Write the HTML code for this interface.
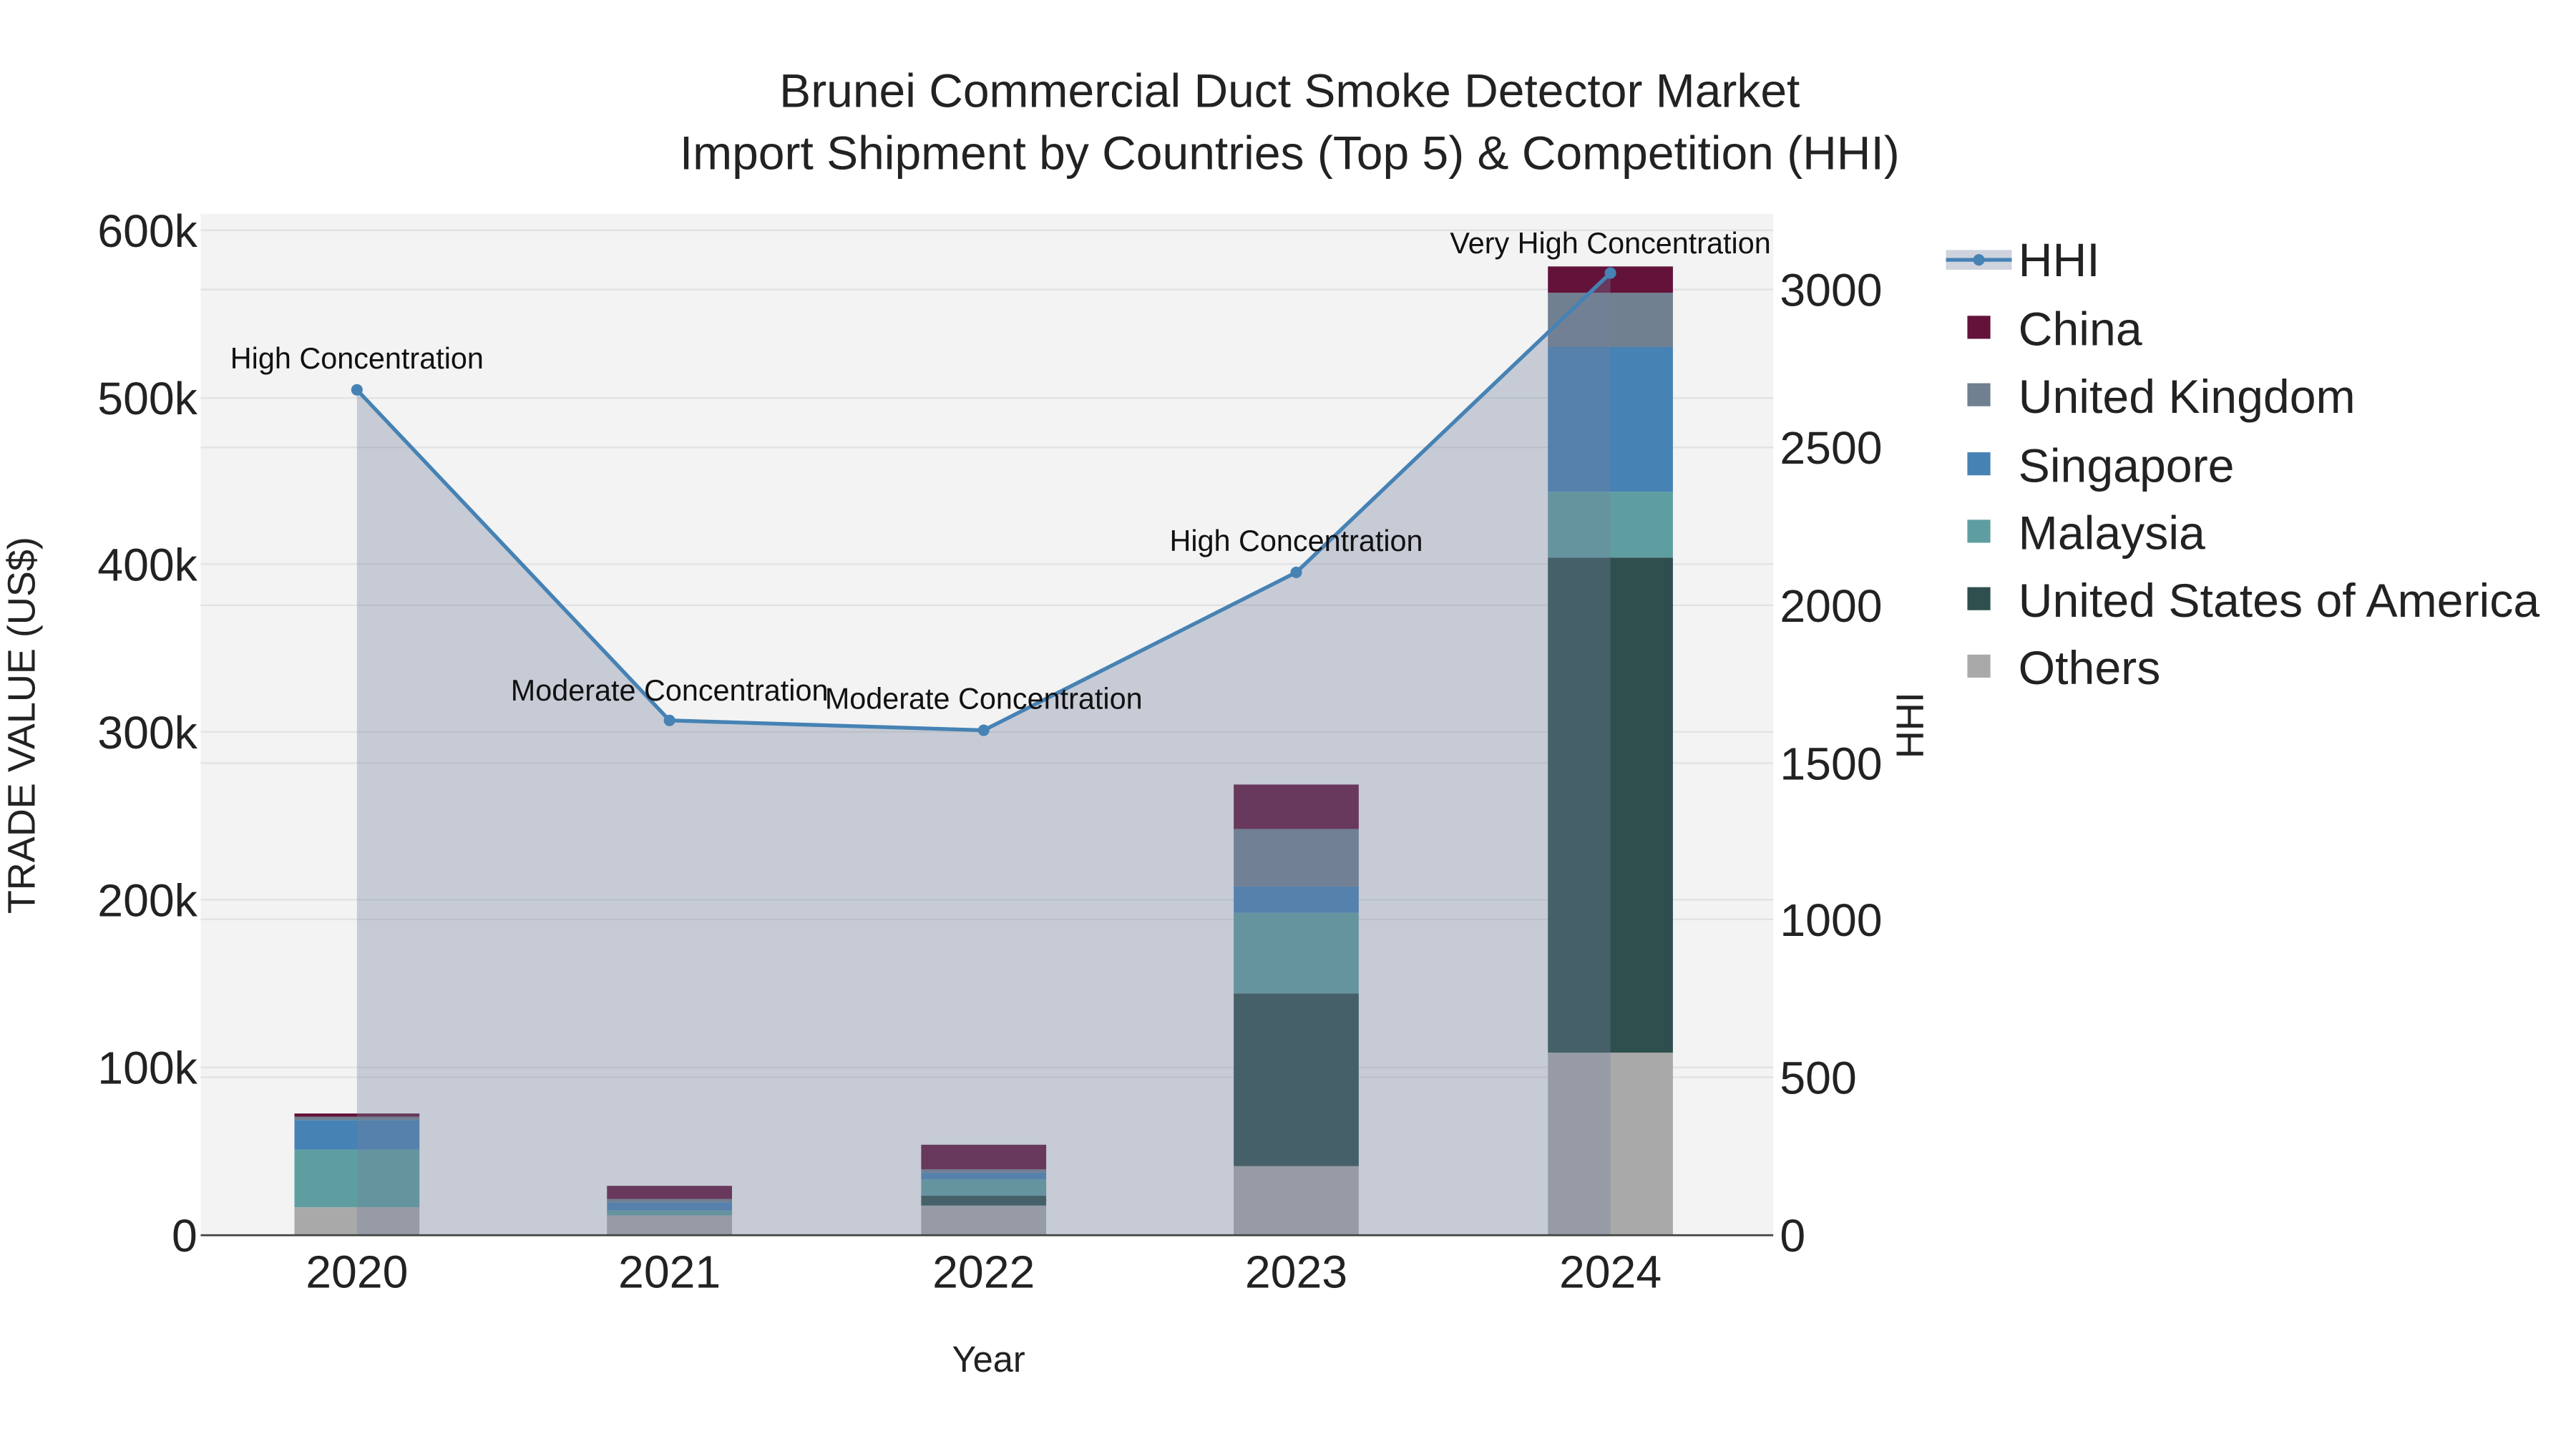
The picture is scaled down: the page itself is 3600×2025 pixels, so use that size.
<!DOCTYPE html>
<html><head><meta charset="utf-8"><style>html,body{margin:0;padding:0;background:#fff}svg{display:block}</style></head>
<body>
<svg width="3600" height="2025" viewBox="0 0 1566 881" preserveAspectRatio="none" xmlns="http://www.w3.org/2000/svg" font-family="Liberation Sans, sans-serif">
<rect x="0" y="0" width="1566" height="881" fill="#fff"/>
<rect x="122" y="130" width="956" height="621" fill="#f3f3f3"/>
<g stroke="#e2e2e2" stroke-width="1">
<line x1="122" x2="1078" y1="649" y2="649"/><line x1="122" x2="1078" y1="547" y2="547"/><line x1="122" x2="1078" y1="445" y2="445"/><line x1="122" x2="1078" y1="343" y2="343"/><line x1="122" x2="1078" y1="242" y2="242"/><line x1="122" x2="1078" y1="140" y2="140"/>
<line x1="122" x2="1078" y1="655" y2="655"/><line x1="122" x2="1078" y1="559" y2="559"/><line x1="122" x2="1078" y1="464" y2="464"/><line x1="122" x2="1078" y1="368" y2="368"/><line x1="122" x2="1078" y1="272" y2="272"/><line x1="122" x2="1078" y1="176" y2="176"/>
</g>
<g>
<rect x="179" y="734" width="76" height="17" fill="#a9a9a9"/>
<rect x="179" y="699" width="76" height="35" fill="#5f9ea0"/>
<rect x="179" y="681" width="76" height="18" fill="#4682b4"/>
<rect x="179" y="679" width="76" height="2" fill="#708090"/>
<rect x="179" y="677" width="76" height="2" fill="#63133a"/>

<rect x="369" y="739" width="76" height="12" fill="#a9a9a9"/>
<rect x="369" y="736" width="76" height="3" fill="#5f9ea0"/>
<rect x="369" y="731" width="76" height="5" fill="#4682b4"/>
<rect x="369" y="729" width="76" height="2" fill="#708090"/>
<rect x="369" y="721" width="76" height="8" fill="#63133a"/>

<rect x="560" y="733" width="76" height="18" fill="#a9a9a9"/>
<rect x="560" y="727" width="76" height="6" fill="#2f4f4f"/>
<rect x="560" y="717" width="76" height="10" fill="#5f9ea0"/>
<rect x="560" y="713" width="76" height="4" fill="#4682b4"/>
<rect x="560" y="711" width="76" height="2" fill="#708090"/>
<rect x="560" y="696" width="76" height="15" fill="#63133a"/>

<rect x="750" y="709" width="76" height="42" fill="#a9a9a9"/>
<rect x="750" y="604" width="76" height="105" fill="#2f4f4f"/>
<rect x="750" y="555" width="76" height="49" fill="#5f9ea0"/>
<rect x="750" y="539" width="76" height="16" fill="#4682b4"/>
<rect x="750" y="504" width="76" height="35" fill="#708090"/>
<rect x="750" y="477" width="76" height="27" fill="#63133a"/>

<rect x="941" y="640" width="76" height="111" fill="#a9a9a9"/>
<rect x="941" y="339" width="76" height="301" fill="#2f4f4f"/>
<rect x="941" y="299" width="76" height="40" fill="#5f9ea0"/>
<rect x="941" y="211" width="76" height="88" fill="#4682b4"/>
<rect x="941" y="178" width="76" height="33" fill="#708090"/>
<rect x="941" y="162" width="76" height="16" fill="#63133a"/>
</g>
<path d="M217,751 L217,237 L407,438 L598,444 L788,348 L979,166 L979,751 Z" fill="rgb(115,129,158)" fill-opacity="0.35"/>
<polyline points="217,237 407,438 598,444 788,348 979,166" fill="none" stroke="#4682b4" stroke-width="2.3"/>
<g fill="#4682b4"><circle cx="217" cy="237" r="3.5"/><circle cx="407" cy="438" r="3.5"/><circle cx="598" cy="444" r="3.5"/><circle cx="788" cy="348" r="3.5"/><circle cx="979" cy="166" r="3.5"/></g>
<line x1="122" x2="1078" y1="751" y2="751" stroke="#444" stroke-width="1.2"/>
<g font-size="18" fill="#111" text-anchor="middle">
<text x="217" y="224">High Concentration</text>
<text x="407" y="426">Moderate Concentration</text>
<text x="598" y="431">Moderate Concentration</text>
<text x="788" y="335">High Concentration</text>
<text x="979" y="154">Very High Concentration</text>
</g>
<g font-size="28.7" fill="#222" text-anchor="middle">
<text x="784" y="65">Brunei Commercial Duct Smoke Detector Market</text>
<text x="784" y="103">Import Shipment by Countries (Top 5) &amp; Competition (HHI)</text>
</g>
<g font-size="28" fill="#222" text-anchor="end">
<text x="120" y="761">0</text><text x="120" y="659">100k</text><text x="120" y="557">200k</text><text x="120" y="455">300k</text><text x="120" y="353">400k</text><text x="120" y="252">500k</text><text x="120" y="150">600k</text>
</g>
<g font-size="28" fill="#222" text-anchor="start">
<text x="1082" y="761">0</text><text x="1082" y="665">500</text><text x="1082" y="569">1000</text><text x="1082" y="474">1500</text><text x="1082" y="378">2000</text><text x="1082" y="282">2500</text><text x="1082" y="186">3000</text>
</g>
<g font-size="28" fill="#222" text-anchor="middle">
<text x="217" y="783">2020</text><text x="407" y="783">2021</text><text x="598" y="783">2022</text><text x="788" y="783">2023</text><text x="979" y="783">2024</text>
</g>
<text x="601" y="834" font-size="22" fill="#222" text-anchor="middle">Year</text>
<text transform="translate(21,441) rotate(-90)" font-size="23.5" fill="#222" text-anchor="middle">TRADE VALUE (US$)</text>
<text transform="translate(1169,441) rotate(-90)" font-size="23.5" fill="#222" text-anchor="middle">HHI</text>
<rect x="1183" y="152" width="40" height="12" fill="rgb(115,129,158)" fill-opacity="0.35"/>
<line x1="1183" x2="1223" y1="158" y2="158" stroke="#4682b4" stroke-width="2.3"/>
<circle cx="1203" cy="158" r="3.5" fill="#4682b4"/>
<rect x="1196" y="192" width="14" height="14" fill="#63133a"/>
<rect x="1196" y="233" width="14" height="14" fill="#708090"/>
<rect x="1196" y="275" width="14" height="14" fill="#4682b4"/>
<rect x="1196" y="316" width="14" height="14" fill="#5f9ea0"/>
<rect x="1196" y="357" width="14" height="14" fill="#2f4f4f"/>
<rect x="1196" y="398" width="14" height="14" fill="#a9a9a9"/>
<g font-size="28.8" fill="#222">
<text x="1227" y="168">HHI</text>
<text x="1227" y="210">China</text>
<text x="1227" y="251">United Kingdom</text>
<text x="1227" y="293">Singapore</text>
<text x="1227" y="334">Malaysia</text>
<text x="1227" y="375">United States of America</text>
<text x="1227" y="416">Others</text>
</g>
</svg>
</body></html>
